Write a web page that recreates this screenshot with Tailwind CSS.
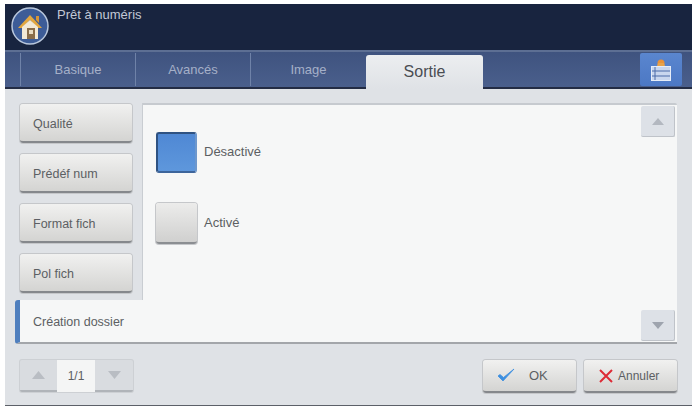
<!DOCTYPE html>
<html>
<head>
<meta charset="utf-8">
<script src="https://cdn.jsdelivr.net/npm/@tailwindcss/browser@4"></script>
</head>
<body class="bg-white">
<div class="w-[692px] h-[406px] pt-[4px] pl-[5px] flex flex-col overflow-hidden font-['Liberation_Sans',sans-serif] text-[12.5px] text-[#5c5f63]">
  <!-- header -->
  <div class="h-[46px] shrink-0 bg-[#18243f] flex items-start pl-[6px] pt-[3px] gap-[8px]">
    <svg class="w-[38px] h-[38px] shrink-0" viewBox="0 0 38 38">
      <circle cx="19" cy="19" r="18" fill="#3d5c97" stroke="#b9c7dc" stroke-width="1.5"/>
      <path d="M7 21 L19 8 L31 21 L27 21 L19 13 L11 21Z" fill="#e2a63f"/>
      <path d="M25 9h3v7l-3-3z" fill="#d6953a"/>
      <path d="M11 20 L19 13 L27 20 V32 H11Z" fill="#f3e9d6"/>
      <rect x="16" y="21" width="8" height="11" fill="#8a6d4a"/>
      <rect x="18" y="23" width="4" height="4" fill="#e8dcc4"/>
    </svg>
    <div class="text-[13px] leading-[14px] text-[#c3c9d6] mt-[1px]">Prêt à numéris</div>
  </div>
  <!-- tabs -->
  <div class="h-[39px] shrink-0 bg-gradient-to-b from-[#3f537f] to-[#4a5f8c] border-t-2 border-[#5d6f93] border-b-2 border-b-[#232c44] flex items-end pl-[15px] pr-[10px] relative">
    <div class="w-[115px] h-[33px] mb-[1px] border-l border-[#6f82a8] flex items-center justify-center text-[13px] text-[#a5b0c8]">Basique</div>
    <div class="w-[115px] h-[33px] mb-[1px] border-l border-[#6f82a8] flex items-center justify-center text-[13px] text-[#a5b0c8]">Avancés</div>
    <div class="w-[116px] h-[33px] mb-[1px] border-l border-[#6f82a8] flex items-center justify-center text-[13px] text-[#a5b0c8]">Image</div>
    <div class="w-[117px] h-[34px] -mb-[2px] rounded-t-[3px] bg-gradient-to-b from-[#eceef0] to-[#dfe2e6] flex items-center justify-center text-[16px] text-[#4a4d52]">Sortie</div>
    <div class="ml-auto w-[42px] h-[33px] mb-[1px] rounded-[2px] bg-gradient-to-b from-[#5a86cf] to-[#4c78c4] flex items-center justify-center">
      <svg class="w-[22px] h-[24px]" viewBox="0 0 22 24">
        <circle cx="11" cy="5" r="3.5" fill="#e8923a"/>
        <path d="M7 8h8l-1-3H8z" fill="#e8a34a"/>
        <rect x="1.5" y="8.5" width="19" height="14" fill="#c8d6ee" stroke="#e6edf8"/>
        <path d="M2 13h18M2 18h18" stroke="#4a6aa8" stroke-width="1.2"/>
        <path d="M5 9v13" stroke="#4a6aa8" stroke-width="1"/>
      </svg>
    </div>
  </div>
  <!-- body -->
  <div class="flex-1 bg-[#dfe2e6] border-b border-[#5c6068] flex flex-col pt-[14px] pr-[15px]">
    <div class="h-[241px] flex">
      <!-- left menu -->
      <div class="w-[138px] shrink-0 flex flex-col">
        <div class="flex flex-col gap-[11px] pl-[15px] pr-[10px] pt-[1px] h-[198px] border-r border-[#c9cdd2]">
          <button class="h-[39px] shrink-0 pl-[13px] pt-[3px] text-left rounded-[3px] border-b-2 border-[#85888c] bg-gradient-to-b from-[#f1f1f0] to-[#d4d4d2] shadow-[0_0_0_1px_#c5c7ca]">Qualité</button>
          <button class="h-[39px] shrink-0 pl-[13px] pt-[3px] text-left rounded-[3px] border-b-2 border-[#85888c] bg-gradient-to-b from-[#f1f1f0] to-[#d4d4d2] shadow-[0_0_0_1px_#c5c7ca]">Prédéf num</button>
          <button class="h-[39px] shrink-0 pl-[13px] pt-[3px] text-left rounded-[3px] border-b-2 border-[#85888c] bg-gradient-to-b from-[#f1f1f0] to-[#d4d4d2] shadow-[0_0_0_1px_#c5c7ca]">Format fich</button>
          <button class="h-[39px] shrink-0 pl-[13px] pt-[3px] text-left rounded-[3px] border-b-2 border-[#85888c] bg-gradient-to-b from-[#f1f1f0] to-[#d4d4d2] shadow-[0_0_0_1px_#c5c7ca]">Pol fich</button>
        </div>
        <div class="h-[44px] -mt-[1px] ml-[10px] pt-[3px] bg-[#f6f7f7] border-l-[5px] border-[#4f7fbe] border-b-2 border-b-[#a3a6aa] rounded-l-[3px] flex items-center pl-[13px] -mr-[1px] relative">Création dossier</div>
      </div>
      <!-- panel -->
      <div class="flex-1 bg-[#f6f7f7] border-t-2 border-[#c6cacf] border-b-2 border-b-[#a3a6aa] flex rounded-tr-[2px]">
        <div class="flex-1 flex flex-col pl-[13px] pt-[27px] gap-[30px]">
          <div class="flex items-center gap-[7px]">
            <div class="w-[41px] h-[41px] rounded-[3px] bg-gradient-to-b from-[#4f88d4] to-[#5e97dc] border-2 border-[#2e5282] border-r-[#6d97cc] border-b-[#3d659b]"></div>
            <span class="text-[13px] -mt-[2px]">Désactivé</span>
          </div>
          <div class="flex items-center gap-[7px]">
            <div class="w-[41px] h-[41px] rounded-[3px] bg-gradient-to-b from-[#ececeb] to-[#d0d0cf] border-b-2 border-[#8b8e92] shadow-[0_0_0_1px_#c5c7ca]"></div>
            <span class="text-[13px] -mt-[2px]">Activé</span>
          </div>
        </div>
        <div class="w-[37px] shrink-0 flex flex-col justify-between py-[1px] pl-[1px] pr-[2px]">
          <div class="h-[31px] rounded-[2px] bg-[#dde1e7] border-b border-r border-[#bfc3c9] flex items-center justify-center">
            <svg class="w-[12px] h-[7px]" viewBox="0 0 12 7"><path d="M6 0L12 7H0Z" fill="#b3b8c0"/></svg>
          </div>
          <div class="h-[31px] rounded-[2px] bg-[#dde1e7] border-b border-r border-[#bfc3c9] flex items-center justify-center">
            <svg class="w-[12px] h-[7px]" viewBox="0 0 12 7"><path d="M0 0H12L6 7Z" fill="#9ea4ae"/></svg>
          </div>
        </div>
      </div>
    </div>
    <!-- bottom bar -->
    <div class="flex items-start pl-[15px] pt-[16px]">
      <div class="flex h-[32px] w-[113px] rounded-[2px] border-b-2 border-[#b0b4b9] bg-[#d9dce0] shadow-[0_0_0_1px_#cdd0d4]">
        <div class="w-[37px] flex items-center justify-center">
          <svg class="w-[13px] h-[8px]" viewBox="0 0 13 8"><path d="M6.500 0L13 8H0Z" fill="#b9bdc3"/></svg>
        </div>
        <div class="w-[38px] h-[32px] bg-[#f4f5f5] flex items-center justify-center text-[12px]">1/1</div>
        <div class="w-[38px] flex items-center justify-center">
          <svg class="w-[13px] h-[8px]" viewBox="0 0 13 8"><path d="M0 0H13L6.500 8Z" fill="#b9bdc3"/></svg>
        </div>
      </div>
      <button class="ml-auto w-[93px] h-[33px] rounded-[3px] border-b-2 border-[#85888c] bg-gradient-to-b from-[#f1f1f0] to-[#d4d4d2] shadow-[0_0_0_1px_#c5c7ca] flex items-center pl-[14px] gap-[14px] text-[13px]">
        <svg class="w-[18px] h-[15px]" viewBox="0 0 18 15"><path d="M1 8 L6 13 L17 1 L6.500 9.500 L3 6.500Z" fill="#3d8fe0" stroke="#3d8fe0" stroke-width="0.800"/></svg>
        <span>OK</span>
      </button>
      <button class="ml-[8px] w-[93px] h-[33px] rounded-[3px] border-b-2 border-[#85888c] bg-gradient-to-b from-[#f1f1f0] to-[#d4d4d2] shadow-[0_0_0_1px_#c5c7ca] flex items-center pl-[15px] gap-[5px] text-[12px]">
        <svg class="w-[14px] h-[14px]" viewBox="0 0 14 14"><path d="M1 1L13 13M13 1L1 13" stroke="#dd2b36" stroke-width="2"/></svg>
        <span>Annuler</span>
      </button>
    </div>
  </div>
</div>
</body>
</html>
